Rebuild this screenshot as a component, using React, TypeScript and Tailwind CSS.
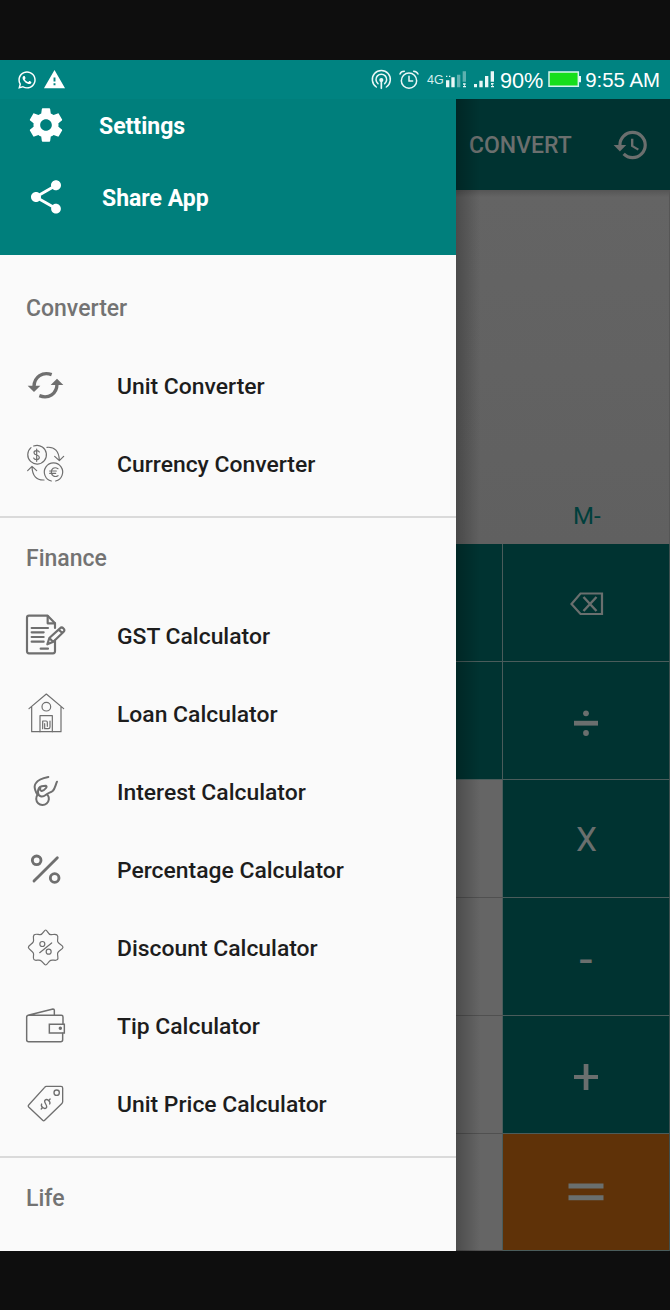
import type { ReactNode } from "react";
import { FaWhatsapp } from "react-icons/fa";
import { MdHistory, MdShare, MdWarning } from "react-icons/md";

type Item = { label: string; icon: ReactNode };

function Glyph({ box, width = 3.6, children }: { box: string; width?: number; children: ReactNode }) {
  return (
    <svg
      viewBox={box}
      className="size-12 shrink-0"
      fill="none"
      stroke="#6f6f6f"
      strokeWidth={width}
      strokeLinecap="round"
      strokeLinejoin="round"
    >
      {children}
    </svg>
  );
}

const converter: Item[] = [
  {
    label: "Unit Converter",
    icon: (
      <Glyph box="36 36 144 144" width={10}>
        <path strokeLinecap="butt" d="M125 74 C98 64 73 80 72 109 M88 137 C116 148 141 131 141 101" />
        <path stroke="none" fill="#6f6f6f" d="M53 107h38l-19 19zM122 105h38l-19-19z" />
      </Glyph>
    ),
  },
  {
    label: "Currency Converter",
    icon: (
      <Glyph box="36 270 144 144">
        <path d="M63 293 A28 28 0 1 0 97 291 A28 28 0 0 0 71 288" />
        <path d="M137 393 A27.500 27.500 0 1 0 124 393" />
        <path d="M111 292 C134 290 147 303 148 331 M134 319 L148 332 L161 319 M102 390 C79 391 67 377 66 350 M53 362 L66 349 L80 362" />
        <path d="M88 306 C85 300 72 300 72 308 C72 317 88 313 88 322 C88 331 74 331 71 324 M80 297 V334" />
        <path d="M144 356 C132 349 124 357 124 366 C124 377 134 383 144 377 M119 363 H139 M119 370 H137" />
      </Glyph>
    ),
  },
];

const finance: Item[] = [
  {
    label: "GST Calculator",
    icon: (
      <Glyph box="36 36 144 144" width={6.5}>
        <path d="M135 84 V70 L113 47 H57 Q51 47 51 53 V154 Q51 160 57 160 H129 Q135 160 135 154 V122" />
        <path d="M113 48 V70 H135 M65 84 H114 M65 97 H101 M65 111 H101 M65 125 H101 M92 146 H114" />
        <path d="M112 133 L118 114 L150 85 Q155 80 160 85 Q166 90 161 95 L130 125 Z M118 114 L129 125 M146 89 L157 99" />
      </Glyph>
    ),
  },
  {
    label: "Loan Calculator",
    icon: (
      <Glyph box="36 270 144 144">
        <path d="M57 326 L109 282 L161 326 M65 320 V395 H153 V320" />
        <circle cx="109" cy="320" r="13" />
        <path d="M90 395 V347 H127 V395 M98 386 V363 H108 Q112 363 112 367 V379 M104 371 V386 H115 Q120 386 120 381 V363" />
      </Glyph>
    ),
  },
  {
    label: "Interest Calculator",
    icon: (
      <Glyph box="36 24 144 144" width={6}>
        <path d="M115 51 C100 54 84 59 78 69 Q71 78 76 91 Q78 98 82 103" />
        <path d="M141 65 C136 76 135 87 128 93 C120 99 115 97 107 105 C97 113 84 110 84 97 C84 86 86 81 95 79 L107 77 Q112 80 108 84 Q103 91 95 93 Q88 91 91 84" />
        <path d="M83 104 A19 19 0 1 0 113 105" />
      </Glyph>
    ),
  },
  {
    label: "Percentage Calculator",
    icon: (
      <Glyph box="36 258 144 144" width={8.5}>
        <circle cx="80" cy="301" r="13" />
        <circle cx="134" cy="354" r="13" />
        <path d="M142 293 L72 363" />
      </Glyph>
    ),
  },
  {
    label: "Discount Calculator",
    icon: (
      <Glyph box="36 27 144 144">
        <path d="M107 45 C112 45 114 59 122 59 C129 59 137 56 141 60 C147 65 141 73 143 80 C145 87 159 91 159 97 C159 103 145 107 143 114 C141 122 147 129 142 134 C137 139 129 133 122 136 C115 139 112 150 107 150 C102 150 98 139 91 136 C84 133 77 139 72 134 C67 129 73 122 70 114 C67 107 55 103 55 97 C55 91 67 87 70 80 C73 73 67 66 72 60 C77 55 84 59 91 59 C99 59 102 45 107 45 Z" />
        <circle cx="97" cy="87" r="7.5" />
        <circle cx="116" cy="110" r="7.5" />
        <path d="M125 84 L89 113" />
      </Glyph>
    ),
  },
  {
    label: "Tip Calculator",
    icon: (
      <Glyph box="36 261 144 144" width={4.4}>
        <path d="M159 328 V306 Q159 301 154 301 H56 Q50 301 50 307 V374 Q50 380 56 380 H152 Q158 380 158 374 V355 M54 301 L129 282 Q133 282 133 286 V301" />
        <path strokeLinejoin="miter" d="M118 328 H163 V354 H118 Z" />
        <circle cx="151" cy="340" r="3" fill="#6f6f6f" />
      </Glyph>
    ),
  },
  {
    label: "Unit Price Calculator",
    icon: (
      <Glyph box="36 495 144 144" width={4}>
        <path d="M109 514 H153 Q158 514 158 519 V560 Q158 563 155 566 L104 616 Q101 619 98 616 L56 576 Q53 573 56 570 L104 517 Q106 514 109 514 Z" />
        <circle cx="140" cy="533" r="8" />
        <path
          transform="translate(107 567) rotate(42)"
          d="M9 -8 C7 -16 -9 -16 -9 -7 C-9 2 9 -2 9 7 C9 16 -7 16 -9 8 M0 -20 V-14 M0 14 V20"
        />
      </Glyph>
    ),
  },
];

function SectionTitle({ children }: { children: ReactNode }) {
  return (
    <h2 className="flex h-[79px] items-center pl-[26px] pt-[2px] text-[23px] font-medium leading-none text-[#737373]">
      {children}
    </h2>
  );
}

function Section({ title, items }: { title: string; items: Item[] }) {
  return (
    <section className="border-b-2 border-[#dadada] pb-[13px]">
      <SectionTitle>{title}</SectionTitle>
      <ul>
        {items.map((item) => (
          <li key={item.label} className="flex h-[78px] items-center gap-[47px] pl-[22px]">
            {item.icon}
            <span className="whitespace-nowrap pt-[3px] text-[22.9px] font-medium leading-none text-[#1d1d1d]">
              {item.label}
            </span>
          </li>
        ))}
      </ul>
    </section>
  );
}

function StatusBar() {
  return (
    <header className="flex h-[39px] shrink-0 items-center bg-[#008381] font-['Liberation_Sans',sans-serif] text-white">
      <FaWhatsapp className="ml-[17px] size-[20px]" />
      <MdWarning className="ml-[6px] size-[23px]" />
      <div className="ml-auto flex items-center">
        <svg viewBox="18 15 180 117" className="h-[39px] w-[60px]" fill="none" stroke="#eaf7f7" strokeWidth="4.5" strokeLinecap="round">
          <path d="M49 96 A27 27 0 1 1 79 96 M54 86 A16 16 0 1 1 74 86" />
          <path strokeWidth="5" d="M64 79 V100" />
          <circle cx="64" cy="75" r="4" fill="#eaf7f7" />
          <circle cx="147" cy="77" r="23" />
          <path d="M147 64 V78 H158 M120 57 Q123 49 133 49 M161 49 Q171 50 174 57" />
        </svg>
        <span className="ml-[1px] w-[16px] pt-[2px] text-[12.5px] leading-none text-[#d5eeee]">4G</span>
        <svg viewBox="249 15 165 117" className="mr-[2px] h-[39px] w-[55px]" fill="#eaf7f7">
          <path d="M258 76h10v21h-10zM258 62h4v4h-4zM267 62h4v4h-4zM274 67h10v30h-10z" />
          <path opacity=".4" d="M291 59h10v38h-10zM308 49h10v31h-10z" />
          <path d="M309 85h8v4h-3v4h4v4h-9v-4h3v-4h-3z" />
          <path d="M342 87h9v10h-9zM358 77h10v20h-10zM375 63h10v34h-10zM392 49h10v31h-10zM393 84h8v4h-3v5h4v4h-9v-4h3v-4h-3z" />
        </svg>
        <span className="w-[47px] whitespace-nowrap pt-[2px] text-[21.7px] leading-none">90%</span>
        <svg viewBox="561 15 111 117" className="h-[39px] w-[37px]">
          <path fill="#16de1c" stroke="#d4f3ef" strokeWidth="4.500" d="M567 51h88v43h-88z" />
          <path fill="#eaf7f7" d="M657 63h6v19h-6z" />
        </svg>
        <span className="mr-[10px] w-[76px] whitespace-nowrap pt-[2px] text-right text-[20.4px] leading-none">9:55 AM</span>
      </div>
    </header>
  );
}

function Drawer() {
  return (
    <aside className="flex w-[456px] shrink-0 flex-col overflow-hidden bg-[#fafafa]">
      <div className="h-[156px] shrink-0 bg-[#007f7c] text-[23px] font-bold leading-none text-white">
        <div className="flex h-[52px] items-center pl-[25.500px]">
          <svg viewBox="0 0 24 24" className="size-10" fill="currentColor">
            <path d="M19.43 12.98c.04-.32.07-.64.07-.98s-.03-.66-.07-.98l2.11-1.65c.19-.15.24-.42.12-.64l-2-3.46c-.12-.22-.39-.3-.61-.22l-2.490 1c-.52-.4-1.080-.73-1.690-.98l-.38-2.650C14.460 2.180 14.250 2 14 2h-4c-.25 0-.46.18-.49.42l-.38 2.650c-.61.25-1.170.59-1.690.98l-2.490-1c-.23-.09-.49 0-.61.22l-2 3.460c-.13.22-.07.49.12.64l2.110 1.650c-.04.32-.07.65-.07.98s.03.66.07.98l-2.110 1.650c-.19.15-.24.42-.12.64l2 3.460c.12.22.39.3.61.22l2.490-1c.52.4 1.080.73 1.690.98l.38 2.650c.03.24.24.42.49.42h4c.25 0 .46-.18.49-.42l.38-2.650c.61-.25 1.170-.59 1.690-.98l2.490 1c.23.09.49 0 .61-.22l2-3.460c.12-.22.07-.49-.12-.64l-2.110-1.650zM12 15.500c-1.930 0-3.500-1.570-3.500-3.500s1.570-3.500 3.500-3.500 3.500 1.570 3.500 3.500-1.570 3.500-3.500 3.500z" />
          </svg>
          <span className="ml-[33.500px] pt-[3px]">Settings</span>
        </div>
        <div className="mt-[26px] flex h-10 items-center pl-[25.500px]">
          <MdShare className="size-10" />
          <span className="ml-[36.500px] pt-[3px]">Share App</span>
        </div>
      </div>
      <nav className="pt-[13px]">
        <Section title="Converter" items={converter} />
        <Section title="Finance" items={finance} />
        <SectionTitle>Life</SectionTitle>
      </nav>
    </aside>
  );
}

function Key({ side, main, children }: { side: string; main: string; children: ReactNode }) {
  return (
    <div className="flex h-[118px] shrink-0 last:h-[117px]">
      <div className={`w-[47px] border-b border-r border-r-[#4a5c5b] ${side}`} />
      <div
        className={`flex flex-1 items-center justify-center border-b border-r border-b-[#4a5c5b] border-r-[#3d4f4e] text-[#6a6f6e] ${main}`}
      >
        {children}
      </div>
    </div>
  );
}

function Calculator() {
  return (
    <main className="relative flex flex-1 flex-col overflow-hidden bg-[#646464]">
      <div className="flex h-[91px] shrink-0 items-center bg-[#003331] text-[#6b6f6e]">
        <span className="ml-[13px] w-[143px] pt-[2px] text-[23px] font-medium leading-none">CONVERT</span>
        <MdHistory className="size-[38px]" />
      </div>
      <div className="flex h-[354px] shrink-0 flex-col justify-end border-r border-[#565656] bg-linear-to-b from-[#555] via-[#646464] via-[2%] to-[#606060]">
        <div className="mb-4 pl-[117px] text-[24px] leading-none text-[#003f3c]">M-</div>
      </div>
      <div className="flex flex-1 flex-col">
        <Key side="bg-[#003331] border-b-[#4a5c5b]" main="bg-[#003331]">
          <svg viewBox="0 0 34 24" className="ml-[1px] mt-[2px] h-6 w-[34px]" fill="none" stroke="currentColor" strokeWidth="2.2">
            <path d="M10.5 1.5H32V22H10.5L1.5 12z" />
            <path strokeWidth="2.4" d="M13.5 5l13 14M26.5 5l-13 14" />
          </svg>
        </Key>
        <Key side="bg-[#003331] border-b-[#4a5c5b]" main="bg-[#003331]">
          <svg viewBox="0 0 26 26" className="mt-1 size-[26px]" fill="currentColor">
            <circle cx="13" cy="3.3" r="2.9" />
            <path d="M1 10.8h24v4.8H1z" />
            <circle cx="13" cy="23" r="2.9" />
          </svg>
        </Key>
        <Key side="bg-[#656565] border-b-[#505050]" main="bg-[#003331]">
          <span className="ml-px mt-[2px] text-[33.5px] leading-none">X</span>
        </Key>
        <Key side="bg-[#656565] border-b-[#505050]" main="bg-[#003331]">
          <span className="mt-[7px] text-[48px] leading-none">-</span>
        </Key>
        <Key side="bg-[#656565] border-b-[#505050]" main="bg-[#003331]">
          <svg viewBox="0 0 26 26" className="mt-1 size-[26px]" fill="currentColor">
            <path d="M10.7 0h4.700v10.900H25v4.200h-9.600V26h-4.700V15.100H1v-4.200h9.700z" />
          </svg>
        </Key>
        <Key side="bg-[#656565] border-b-[#505050]" main="bg-[#5f3208]">
          <svg viewBox="0 0 36 18" className="h-[18px] w-9" fill="currentColor">
            <path d="M.5 .5h35v5H.5zM.5 12.3h35v5H.5z" />
          </svg>
        </Key>
      </div>
      <div className="pointer-events-none absolute inset-y-0 left-0 w-6 bg-linear-to-r from-black/25 to-transparent" />
    </main>
  );
}

export default function App() {
  return (
    <div className="flex h-[1310px] w-[670px] flex-col overflow-hidden bg-[#0e0e0e] pb-[59px] pt-[60px] font-[Roboto,sans-serif]">
      <StatusBar />
      <div className="flex min-h-0 flex-1">
        <Drawer />
        <Calculator />
      </div>
    </div>
  );
}
